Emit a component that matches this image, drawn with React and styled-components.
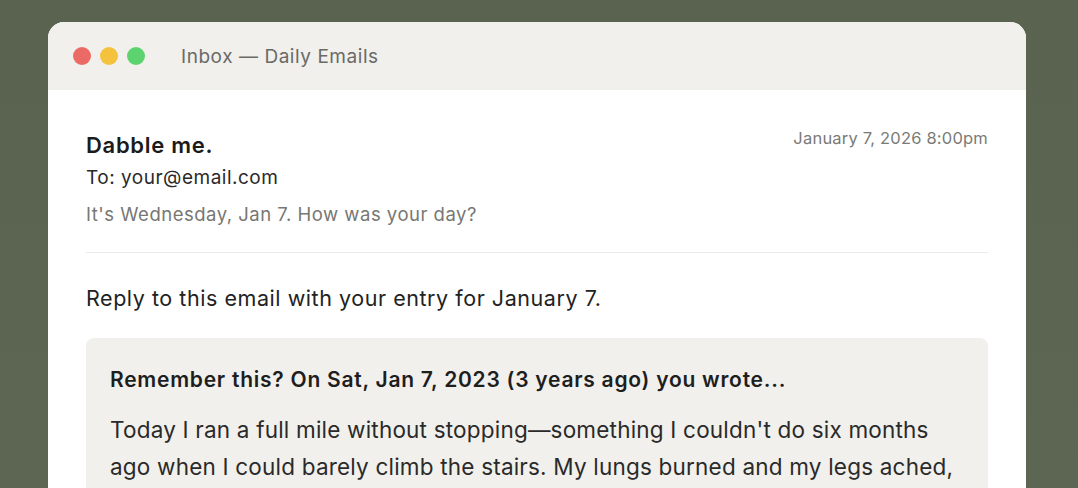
import React from "react";
import styled, { createGlobalStyle } from "styled-components";

const GlobalStyle = createGlobalStyle`
  html, body {
    margin: 0;
    padding: 0;
    background: #5a6450;
    font-family: Inter, "Noto Sans", sans-serif;
  }
`;

const Page = styled.div`
  width: 1078px;
  height: 488px;
  overflow: hidden;
  background: linear-gradient(180deg, #596350 0%, #5c6652 100%);
  padding: 22px 52px 0 48px;
  box-sizing: border-box;
`;

const Window = styled.div`
  width: 978px;
  height: 520px;
  border-radius: 16px;
  overflow: hidden;
  background: #ffffff;
  display: flex;
  flex-direction: column;
`;

const TitleBar = styled.div`
  height: 68px;
  background: #f1f0ec;
  display: flex;
  align-items: center;
  padding: 0 25px;
  flex-shrink: 0;
`;

const Lights = styled.div`
  display: flex;
  gap: 9px;
  margin-right: 36px;
`;

const Light = styled.span`
  width: 18px;
  height: 18px;
  border-radius: 50%;
  background: ${(p) => p.color};
`;

const Title = styled.span`
  font-size: 19px;
  color: #6a6a66;
  letter-spacing: 0.55px;
`;

const Body = styled.div`
  padding: 40px 38px 0 38px;
`;

const Header = styled.div`
  display: flex;
  justify-content: space-between;
  align-items: flex-start;
  padding-bottom: 20px;
  border-bottom: 1px solid #ebebe8;
`;

const Sender = styled.div`
  display: flex;
  flex-direction: column;
`;

const From = styled.div`
  font-size: 22px;
  font-weight: 600;
  color: #1b1b1b;
  line-height: 30px;
  letter-spacing: 0.7px;
`;

const To = styled.div`
  font-size: 19px;
  color: #2a2a2a;
  line-height: 36px;
  letter-spacing: 0.5px;
`;

const Subject = styled.div`
  font-size: 18.5px;
  color: #777773;
  line-height: 36px;
  letter-spacing: 0.5px;
`;

const DateText = styled.div`
  font-size: 16.5px;
  color: #7a7a76;
  line-height: 20px;
  margin-top: -2px;
  letter-spacing: 0.2px;
`;

const Prompt = styled.p`
  margin: 30px 0 0;
  font-size: 21.5px;
  color: #222;
  line-height: 30px;
  letter-spacing: 0.55px;
`;

const Memory = styled.div`
  margin-top: 25px;
  background: #f1f0ec;
  border-radius: 8px;
  padding: 27px 24px 26px;
`;

const MemoryTitle = styled.div`
  font-size: 21px;
  font-weight: 600;
  color: #1e1e1e;
  line-height: 30px;
  letter-spacing: 0.75px;
`;

const MemoryText = styled.p`
  margin: 16px 0 0;
  font-size: 22.5px;
  color: #2a2a2a;
  line-height: 37px;
  letter-spacing: 0.2px;
`;

export default function App() {
  return (
    <>
      <GlobalStyle />
      <Page>
        <Window>
          <TitleBar>
            <Lights>
              <Light color="#ec6a65" />
              <Light color="#f4c23d" />
              <Light color="#5cd36e" />
            </Lights>
            <Title>Inbox — Daily Emails</Title>
          </TitleBar>
          <Body>
            <Header>
              <Sender>
                <From>Dabble me.</From>
                <To>To: your@email.com</To>
                <Subject>It's Wednesday, Jan 7. How was your day?</Subject>
              </Sender>
              <DateText>January 7, 2026 8:00pm</DateText>
            </Header>
            <Prompt>Reply to this email with your entry for January 7.</Prompt>
            <Memory>
              <MemoryTitle>
                Remember this? On Sat, Jan 7, 2023 (3 years ago) you wrote...
              </MemoryTitle>
              <MemoryText>
                Today I ran a full mile without stopping—something I couldn't do
                six months ago when I could barely climb the stairs. My lungs
                burned and my legs ached, but I kept going and I finished.
              </MemoryText>
            </Memory>
          </Body>
        </Window>
      </Page>
    </>
  );
}
